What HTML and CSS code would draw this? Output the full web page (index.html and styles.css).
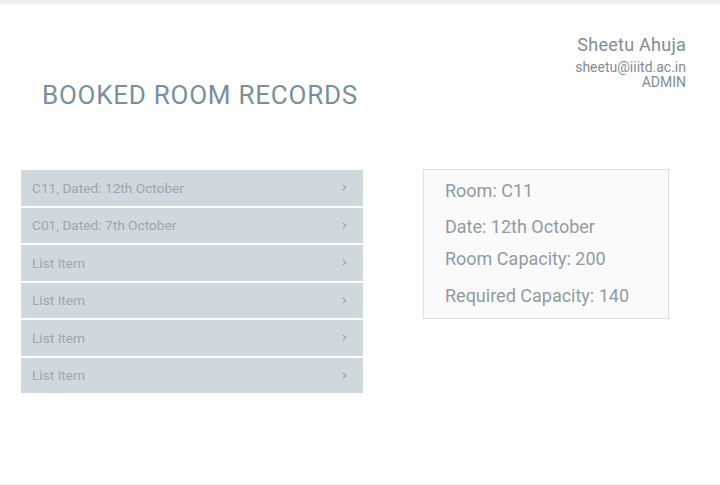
FILE: index.html
```html
<!DOCTYPE html>
<html>
<head>
<meta charset="utf-8">
<link rel="stylesheet" href="styles.css">
</head>
<body>
<div class="page">
  <header class="header">
    <h1 class="title">BOOKED ROOM RECORDS</h1>
    <div class="user">
      <div class="user-name">Sheetu Ahuja</div>
      <div class="user-line user-email">sheetu@iiitd.ac.in</div>
      <div class="user-line">ADMIN</div>
    </div>
  </header>
  <main class="main">
    <ul class="list">
      <li class="item"><span>C11, Dated: 12th October</span><svg class="chev" width="5" height="7" viewBox="0 0 5 7"><polyline points="1,0.8 3.8,3.5 1,6.2" fill="none" stroke="#9a9fa2" stroke-width="1.1"/></svg></li>
      <li class="item"><span>C01, Dated: 7th October</span><svg class="chev" width="5" height="7" viewBox="0 0 5 7"><polyline points="1,0.8 3.8,3.5 1,6.2" fill="none" stroke="#9a9fa2" stroke-width="1.1"/></svg></li>
      <li class="item"><span>List Item</span><svg class="chev" width="5" height="7" viewBox="0 0 5 7"><polyline points="1,0.8 3.8,3.5 1,6.2" fill="none" stroke="#9a9fa2" stroke-width="1.1"/></svg></li>
      <li class="item"><span>List Item</span><svg class="chev" width="5" height="7" viewBox="0 0 5 7"><polyline points="1,0.8 3.8,3.5 1,6.2" fill="none" stroke="#9a9fa2" stroke-width="1.1"/></svg></li>
      <li class="item"><span>List Item</span><svg class="chev" width="5" height="7" viewBox="0 0 5 7"><polyline points="1,0.8 3.8,3.5 1,6.2" fill="none" stroke="#9a9fa2" stroke-width="1.1"/></svg></li>
      <li class="item"><span>List Item</span><svg class="chev" width="5" height="7" viewBox="0 0 5 7"><polyline points="1,0.8 3.8,3.5 1,6.2" fill="none" stroke="#9a9fa2" stroke-width="1.1"/></svg></li>
    </ul>
    <section class="card">
      <div class="row row-1">Room: C11</div>
      <div class="row row-2">Date: 12th October</div>
      <div class="row row-3">Room Capacity: 200</div>
      <div class="row">Required Capacity: 140</div>
    </section>
  </main>
</div>
</body>
</html>
```
FILE: styles.css
```css
html, body {
  margin: 0;
  padding: 0;
  background: #ffffff;
}
body {
  font-family: Roboto, "Liberation Sans", sans-serif;
}
.page {
  width: 720px;
  height: 485px;
  box-sizing: border-box;
  border-top: 4px solid #eeeeee;
  border-bottom: 1px solid #eeeeee;
}
.header {
  display: flex;
  justify-content: space-between;
  align-items: flex-start;
  padding: 0 34px 0 42px;
}
.title {
  margin: 76px 0 0 0;
  font-size: 26px;
  line-height: 30px;
  font-weight: 400;
  letter-spacing: 0.75px;
  color: #78909c;
}
.user {
  padding-top: 30px;
  text-align: right;
  color: #7f8d95;
}
.user-name {
  font-size: 18px;
  line-height: 22px;
  letter-spacing: 0.25px;
}
.user-line {
  font-size: 14px;
  line-height: 15px;
}
.user-email {
  margin-top: 4px;
}
.main {
  display: flex;
  align-items: flex-start;
  gap: 60px;
  padding-left: 21px;
  margin-top: 59px;
}
.list {
  list-style: none;
  margin: 1px 0 0 0;
  padding: 0;
  width: 342px;
}
.item {
  display: flex;
  justify-content: space-between;
  align-items: center;
  height: 35.5px;
  margin-bottom: 2px;
  padding: 0 16px 0 11px;
  box-sizing: border-box;
  background: #cfd8dc;
  color: #a0a7ab;
  font-size: 13.7px;
}
.item:last-child {
  margin-bottom: 0;
}
.chev {
  display: block;
}
.card {
  width: 246px;
  box-sizing: border-box;
  border: 1px solid #e0e0e0;
  background: #fafafa;
  padding: 9px 0 10px 21px;
  color: #8f9ca4;
  font-size: 18px;
}
.row {
  line-height: 24px;
}
.row-1 { margin-bottom: 12px; }
.row-2 { margin-bottom: 8px; }
.row-3 { margin-bottom: 13px; }
```
